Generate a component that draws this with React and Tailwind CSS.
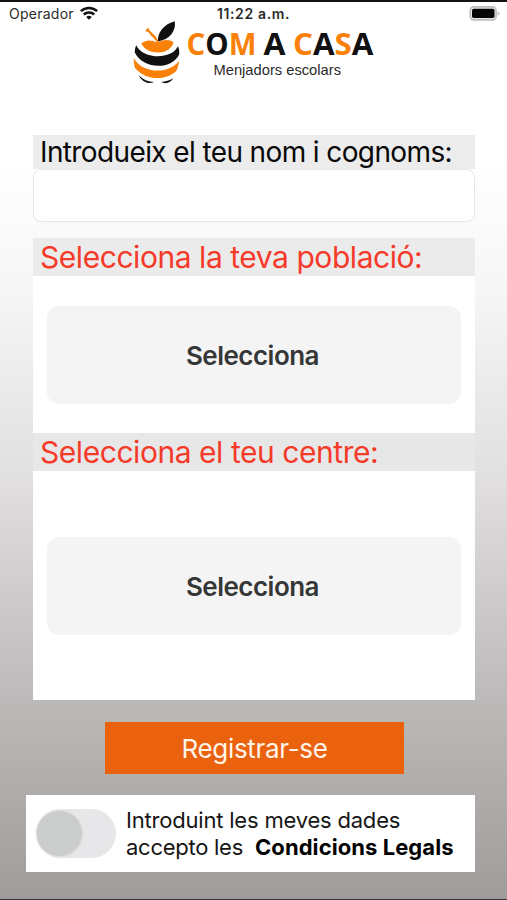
import React, {useState} from 'react'


const StatusBar = () => {
    return (
        <div className="grid h-[19px] grid-cols-3 items-center pl-[9px] pr-[7px] pt-[4px] text-[14px] leading-none text-[#2b2b2b]">
            <div className="flex items-center gap-[6px]">
                <span className="tracking-[0.018em]">Operador</span>
                <svg width="18" height="14" viewBox="0 0 18 14" className="-mt-px">
                    <g fill="none" stroke="#111" strokeWidth="2.5">
                        <path d="M0.9 5.2C5.4 0.8 12.6 0.8 17.1 5.2"/>
                        <path d="M3.8 8.5C6.7 5.7 11.3 5.7 14.2 8.5"/>
                    </g>
                    <path d="M9 13.7L6.2 10.9Q9 8.5 11.8 10.9Z" fill="#111"/>
                </svg>
            </div>
            <span className="-ml-[2px] whitespace-nowrap text-center font-semibold tracking-[0.045em]">11:22 a.m.</span>
            <svg width="31" height="15" viewBox="0 0 31 15" className="-mt-px justify-self-end">
                <rect x="1.2" y="0.9" width="26" height="13" rx="3.6" fill="#e6e6e6" stroke="#bdbdbd" strokeWidth="1.6"/>
                <rect x="3" y="2.7" width="22.5" height="9.4" rx="1.8" fill="#050505"/>
                <path d="M28.6 5.3Q30.6 6 30.6 7.4Q30.6 8.8 28.6 9.5Z" fill="#bdbdbd"/>
            </svg>
        </div>
    )
}

const Logo = () => {
    return (
        <svg width="244" height="66" viewBox="131 19 244 66" className="ml-[131px]">
            {/* apple */}
            <path d="M158 41.500C157.200 33 163 24.500 174.800 21.200C176.200 30.500 170.500 39 158 41.500Z" fill="#111"/>
            <path d="M157.600 44C155.500 38.500 151 36.500 149.500 33.500C148.300 31.500 146.800 31.300 145 31.200L148 27.600C150 33.500 157 34 159 44Z" fill="#f98109"/>
            <path d="M141.200 43.600C146 39.500 151.500 39.500 157.200 42.800C163 39.200 169 39 173.600 42.200C170.500 55.300 147.500 56.200 141.200 43.600Z" fill="#f98109"/>
            <path d="M136.200 45.200C142.500 59 171 60.500 178 46.300C179 48.400 179.500 51.600 179.200 54.200C172.500 69.500 144 70.500 134.800 52.600C134.800 49.600 135.300 47.200 136.200 45.200Z" fill="#111"/>
            <path d="M133.800 58C142 73.800 169.500 74.700 179 60.800C178.800 64.500 177.800 68 176.400 70.700C166 81.300 145.500 80.400 135.200 68.200C134 65 133.600 61.500 133.800 58Z" fill="#f98109"/>
            <path d="M138.600 75.200C143 79.500 148 81.700 154 82C148.500 84.700 141.800 81.700 138.600 75.200Z" fill="#111"/>
            <path d="M161 82C165.800 81.600 169.600 80.500 173.300 78.300C170.800 83 165.500 84.400 161 82Z" fill="#111"/>
            <g fill="#111" className="font-['Open_Sans'] text-[31px] font-bold">
                <text x="186.500" y="55" textLength="70" lengthAdjust="spacingAndGlyphs">
                    <tspan fill="#f98109">C</tspan>O<tspan fill="#f98109">M</tspan>
                </text>
                <text x="263.500" y="55" textLength="22" lengthAdjust="spacingAndGlyphs">A</text>
                <text x="293" y="55" textLength="80.500" lengthAdjust="spacingAndGlyphs">
                    <tspan fill="#f98109">C</tspan>A<tspan fill="#f98109">S</tspan>A
                </text>
            </g>
            <text x="213.500" y="74.500" textLength="127.500" lengthAdjust="spacingAndGlyphs" fill="#2b2b2b" className="font-['Liberation_Sans'] text-[15px]">Menjadors escolars</text>
        </svg>
    )
}

const Selector = ({className}) => {
    return (
        <button className={`${className} mx-[14px] block h-[98px] w-[414px] rounded-xl bg-[#f4f4f4] pr-[3px] text-center text-[26px] font-semibold tracking-[-0.02em] text-[#353636]`}>
            Selecciona
        </button>
    )
}

const App = () => {

    const [name, setName] = useState("")
    const [accepted, setAccepted] = useState(false)

    return (
        <div className="h-[900px] w-[507px] overflow-hidden border-b border-t-2 border-b-[#38383a] border-t-[#141214] bg-[linear-gradient(to_bottom,#fff_0%,#fff_18%,#f6f6f6_32%,#e1dfdf_53%,#bcb9b9_78%,#a09c9b_100%)] font-['Inter',sans-serif]">
            <StatusBar/>
            <div className="-mt-[2px]">
                <Logo/>
            </div>

            <div className="ml-[33px] mt-[50px] w-[442px]">
                <label htmlFor="name" className="block h-[34px] whitespace-nowrap bg-[#ececec] pl-[7px] text-[28px] leading-[34px] tracking-[-0.022em] text-[#080808]">
                    Introdueix el teu nom i cognoms:
                </label>
                <input id="name" value={name} onChange={(e) => setName(e.target.value)}
                       className="block h-[53px] w-full rounded-lg border border-[#e6e6e6] bg-white px-3 text-2xl outline-none"/>
            </div>

            <div className="ml-[33px] mt-[16px] h-[462px] w-[442px] bg-white">
                <h2 className="h-[38px] whitespace-nowrap bg-[#ebebeb] pl-[7px] text-[30px] leading-[38px] tracking-[-0.015em] text-[#f53a2a]">
                    Selecciona la teva població:
                </h2>
                <Selector className="mt-[30px]"/>
                <h2 className="mt-[29px] h-[38px] whitespace-nowrap bg-[#e7e7e7] pl-[7px] text-[30px] leading-[38px] tracking-[-0.015em] text-[#f53a2a]">
                    Selecciona el teu centre:
                </h2>
                <Selector className="mt-[66px]"/>
            </div>

            <button className="ml-[105px] mt-[22px] block h-[52px] w-[299px] bg-[#ea620e] text-center text-[26px] tracking-[-0.012em] text-[#fff4ea]">
                Registrar-se
            </button>

            <div className="ml-[26px] mt-[21px] flex h-[77px] w-[449px] items-center bg-white">
                <button role="switch" aria-checked={accepted} onClick={() => setAccepted(!accepted)}
                        className={`ml-[10px] flex h-[49px] w-[80px] shrink-0 items-center rounded-full px-px ${accepted ? "justify-end bg-green-500" : "bg-[#e7e7e9]"}`}>
                    <span className="h-[45px] w-[45px] rounded-full bg-[#cbcccc] shadow-[0_0_3px_#cbcccc]"/>
                </button>
                <div className="ml-[10px] whitespace-nowrap text-[22px] leading-[27px] text-[#161616]">
                    <p className="tracking-[-0.009em]">Introduint les meves dades</p>
                    <p className="flex gap-[12px]">
                        <span className="tracking-[-0.012em]">accepto les</span>
                        <b className="font-bold tracking-[0.003em] text-black">Condicions Legals</b>
                    </p>
                </div>
            </div>
        </div>
    );
};

export default App;
